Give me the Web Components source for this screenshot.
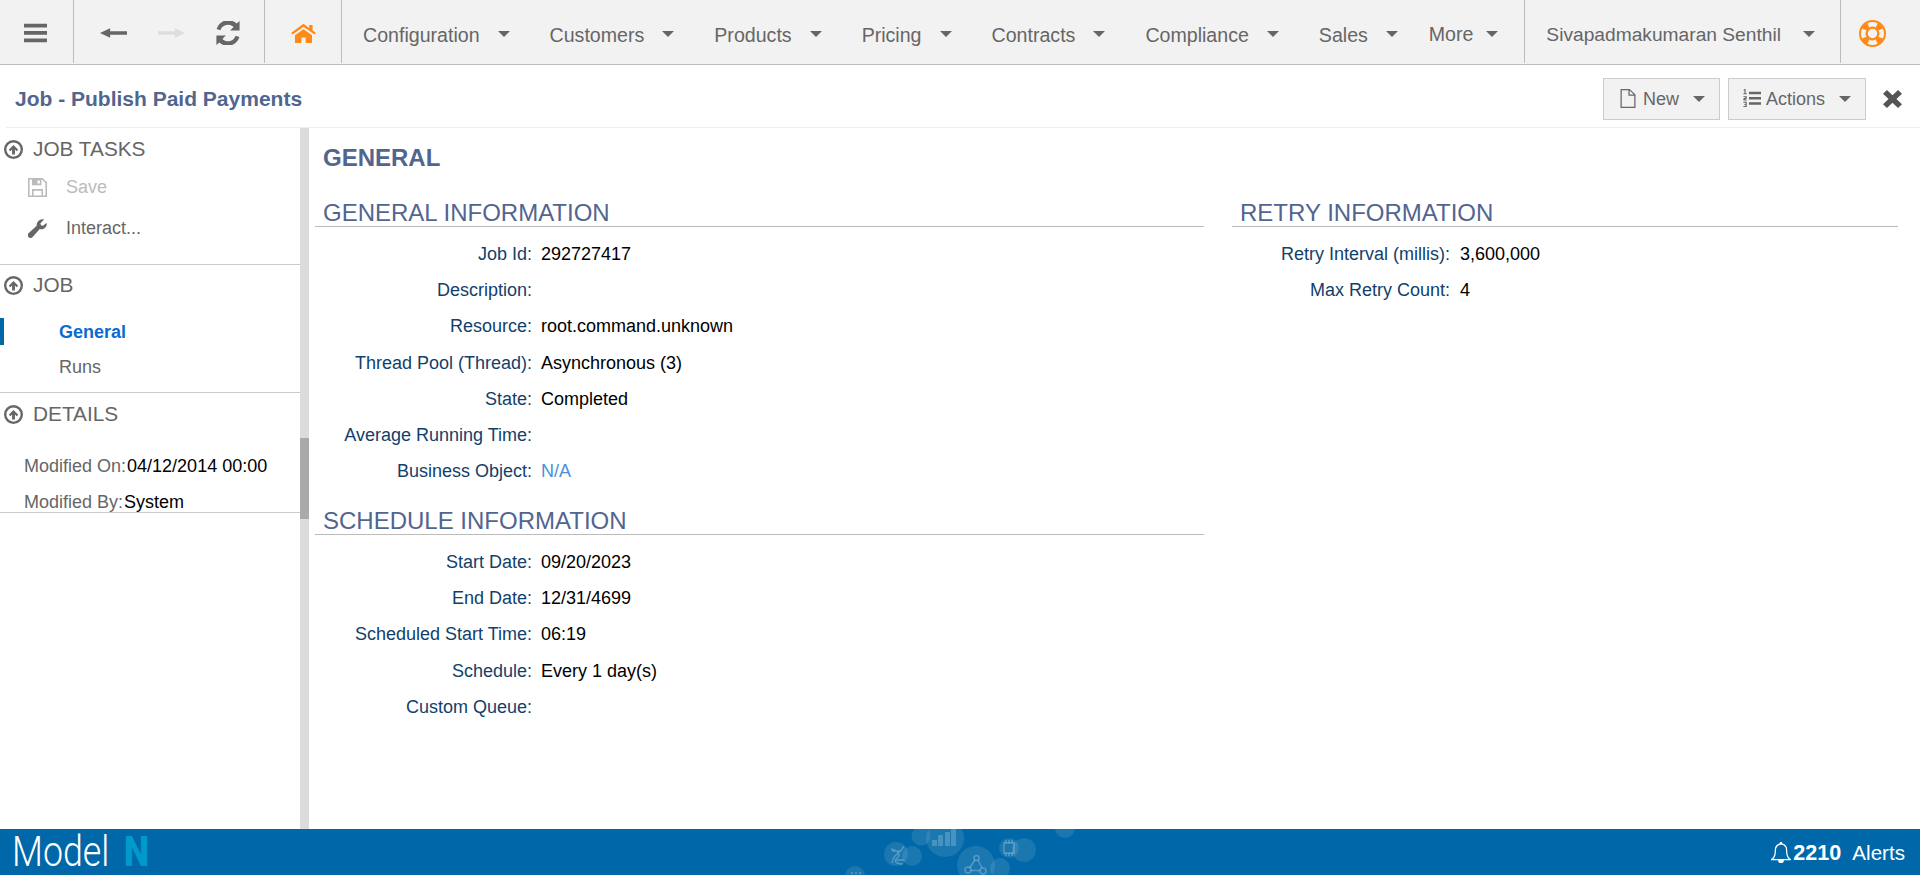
<!DOCTYPE html>
<html lang="en">
<head>
<meta charset="utf-8">
<title>Job - Publish Paid Payments</title>
<style>
    html, body { margin: 0; height: 100%; overflow: hidden; }
    body {
        display: flex;
        flex-direction: column;
        font-family: "Liberation Sans", Arial, sans-serif;
        background: #fff;
    }
</style>
</head>
<body>
<mn-topbar>
    <mn-nav-item>Configuration</mn-nav-item>
    <mn-nav-item>Customers</mn-nav-item>
    <mn-nav-item>Products</mn-nav-item>
    <mn-nav-item>Pricing</mn-nav-item>
    <mn-nav-item>Contracts</mn-nav-item>
    <mn-nav-item>Compliance</mn-nav-item>
    <mn-nav-item>Sales</mn-nav-item>
</mn-topbar>
<mn-pagehead>Job - Publish Paid Payments</mn-pagehead>
<mn-layout>
    <mn-sidebar slot="side"></mn-sidebar>
    <mn-form slot="main"></mn-form>
</mn-layout>
<mn-footer></mn-footer>

<script>
const ICONS = {
    bars: '<path d="M0 1h24v4.500H0zM0 9.700h24v4.500H0zM0 18.500h24v4.500H0z"/>',
    left: '<path d="M0 12 9 5v4.500h15v5H9V19z"/>',
    right: '<path d="M24 12 15 5v4.500H0v5h15V19z"/>',
    refresh: '<path d="M20.600 2.600 23.600 0v9.400h-9.400l3.400-3.300A8 8 0 0 0 4.400 9.200L.6 8.100A12 12 0 0 1 20.600 2.600zM3.400 21.400.4 24v-9.400h9.400l-3.400 3.300a8 8 0 0 0 13.200-3.100l3.800 1.100A12 12 0 0 1 3.400 21.400z"/>',
    home: '<path d="M12 1 17.500 6V2.500h3.200v6.300L24 12l-1.500 1.800L12 4.500 1.500 13.800 0 12zM3.800 14.800 12 7.500l8.200 7.300V24h-6.100v-6.500H9.900V24H3.800z"/>',
    ring: '<path fill-rule="evenodd" d="M12 0a12 12 0 1 1 0 24 12 12 0 0 1 0-24zM7.500 2.900l1.600 3.700a6 6 0 0 1 5.800 0l1.600-3.700a10.100 10.100 0 0 0-9 0zM21.100 7.500l-3.700 1.600a6 6 0 0 1 0 5.800l3.700 1.600a10.100 10.100 0 0 0 0-9zM2.900 7.500a10.100 10.100 0 0 0 0 9l3.700-1.600a6 6 0 0 1 0-5.800zM9.100 17.400l-1.600 3.700a10.100 10.100 0 0 0 9 0l-1.600-3.700a6 6 0 0 1-5.800 0zM12 7.800a4.200 4.200 0 1 0 0 8.400 4.200 4.200 0 0 0 0-8.400z"/>',
    file: '<path fill-rule="evenodd" d="M3 0h11l7 7v17H3zM4.500 1.500v21h15V8.500H12.500V1.500zM14 2v5h5z"/>',
    listol: '<path d="M8 3.500h16v3.500H8zM8 10.500h16v3.500H8zM8 17.500h16v3.500H8z"/><path d="M2 0h1.500v5.500H5V7H.5V5.500H2V1.800L.8 2.600V1.200zM.5 9.500h4.500v3L2.300 14H5v1.300H.5v-2.500L3.300 11V10.800H.5zM.5 17H5v7H.5v-1.300h3V21H1.500v-1.100h2v-1.600h-3z"/>',
    times: '<path d="M5 0 12 7l7-7 5 5-7 7 7 7-5 5-7-7-7 7-5-5 7-7-7-7z"/>',
    circleup: '<path fill-rule="evenodd" d="M12 0a12 12 0 1 1 0 24 12 12 0 0 1 0-24zM12 3a9 9 0 1 0 0 18 9 9 0 0 0 0-18z"/><path d="M12 6.200 18 12.200 16 14.200 13.800 12v6.200h-3.600V12L8 14.200 6 12.200z"/>',
    save: '<path fill-rule="evenodd" d="M0 0h18.500L24 5.500V24H0zM2 2v20h3v-8h14v8h3V6.300L17.700 2H17v7H5V2zM7 16v6h10v-6zM12 3v4h3V3z"/>',
    wrench: '<path d="M23.700 5.100c.6 3.700-2.500 8-6.500 8-.9 0-1.600-.1-2.300-.4L5.600 22.900a3.400 3.400 0 0 1-4.800 0l-.2-.2a3.400 3.400 0 0 1 0-4.800L11 8.500a7.400 7.400 0 0 1 7.300-8.300c.9 0 1.600.2 2 .4L15.700 5.300l.6 2.500 2.400.6z"/>',
    bell: '<path fill-rule="evenodd" d="M12 0a1.700 1.700 0 0 1 1.700 1.800C17.300 2.500 19.500 5.500 19.500 9c0 6 1.500 8.500 4.500 10.500v1.300H15.500a3.500 3.500 0 0 1-7 0H0v-1.300C3 17.500 4.500 15 4.500 9c0-3.500 2.200-6.500 5.800-7.200A1.700 1.700 0 0 1 12 0zm0 3.200C8.500 3.200 6 5.600 6 9c0 5-1 8.400-3.200 10.300h18.400C19 17.400 18 14 18 9c0-3.400-2.500-5.800-6-5.800z"/>'
};

class Icon extends HTMLElement {
    connectedCallback() {
        const w = this.getAttribute('w') || 20;
        const h = this.getAttribute('h') || w;
        this.attachShadow({ mode: 'open' }).innerHTML = `
        <style>
        :host { display: inline-flex; flex: none; line-height: 0; color: inherit; }
        </style>
        <svg width="${w}" height="${h}" viewBox="0 0 24 24" fill="currentColor" preserveAspectRatio="none">${ICONS[this.getAttribute('name')]}</svg>`;
    }
}
customElements.define('mn-icon', Icon);

class Caret extends HTMLElement {
    constructor() {
        super();
        this.attachShadow({ mode: 'open' }).innerHTML = `
        <style>
        :host {
            display: block;
            flex: none;
            width: 0;
            height: 0;
            border-left: 6px solid transparent;
            border-right: 6px solid transparent;
            border-top: 6px solid #666;
        }
        </style>`;
    }
}
customElements.define('mn-caret', Caret);

class NavItem extends HTMLElement {
    constructor() {
        super();
        this.attachShadow({ mode: 'open' }).innerHTML = `
        <style>
        :host {
            display: flex;
            align-items: center;
            padding: 6px 19px 0 21px;
            gap: 18px;
            font-size: 19.6px;
            color: #666;
        }
        mn-caret { margin-top: -2px; }
        </style>
        <slot></slot><mn-caret></mn-caret>`;
    }
}
customElements.define('mn-nav-item', NavItem);

class Topbar extends HTMLElement {
    constructor() {
        super();
        this.attachShadow({ mode: 'open' }).innerHTML = `
        <style>
        :host {
            display: flex;
            flex: none;
            height: 64px;
            background: #f2f2f2;
            border-bottom: 1px solid #bbb;
            color: #666;
            font-size: 19.2px;
        }
        .cell {
            display: flex;
            align-items: center;
            height: 63px;
            padding-top: 2px;
            border-right: 1px solid #bbb;
            box-sizing: border-box;
        }
        .menu { width: 74px; padding-left: 24px; }
        .hist { width: 191px; padding-left: 26px; gap: 31px; }
        .home { width: 77px; padding-left: 26px; color: #ff8a14; }
        .more {
            display: flex;
            align-items: center;
            gap: 13px;
            padding: 6px 26px 0 0;
            height: 57px;
            font-size: 19.6px;
            border-right: 1px solid #bbb;
        }
        .user {
            display: flex;
            align-items: center;
            gap: 22px;
            padding: 6px 25px 0 21px;
            height: 57px;
            border-right: 1px solid #bbb;
        }
        .more mn-caret, .user mn-caret { margin-top: -2px; }
        .help { width: 79px; display: flex; align-items: center; padding: 2px 0 0 18px; color: #ff8a14; box-sizing: border-box; }
        .off { color: #ddd; }
        .nav-wrap { display: flex; flex: 1; }
        </style>
        <div class="cell menu"><mn-icon name="bars" w="23" h="20"></mn-icon></div>
        <div class="cell hist">
            <mn-icon name="left" w="27" h="16"></mn-icon>
            <mn-icon class="off" name="right" w="27" h="16"></mn-icon>
            <mn-icon name="refresh" w="24"></mn-icon>
        </div>
        <div class="cell home"><mn-icon name="home" w="25" h="20"></mn-icon></div>
        <div class="nav-wrap"><slot></slot></div>
        <div class="more">More<mn-caret></mn-caret></div>
        <div class="user">Sivapadmakumaran Senthil<mn-caret></mn-caret></div>
        <div class="help"><mn-icon name="ring" w="27"></mn-icon></div>`;
    }
}
customElements.define('mn-topbar', Topbar);

class ActionButton extends HTMLElement {
    connectedCallback() {
        this.attachShadow({ mode: 'open' }).innerHTML = `
        <style>
        :host {
            display: flex;
            align-items: center;
            box-sizing: border-box;
            height: 42px;
            padding: 0 14px 0 14px;
            background: #f2f2f2;
            border: 1px solid #ccc;
            color: #666;
            font-size: 18px;
            gap: 5px;
        }
        mn-caret { margin-left: 9px; }
        mn-icon { margin-top: -2px; }
        </style>
        <mn-icon name="${this.getAttribute('icon')}" w="${this.getAttribute('w')}" h="${this.getAttribute('h')}"></mn-icon>
        <slot></slot>
        <mn-caret></mn-caret>`;
    }
}
customElements.define('mn-action-button', ActionButton);

class Pagehead extends HTMLElement {
    constructor() {
        super();
        this.attachShadow({ mode: 'open' }).innerHTML = `
        <style>
        :host {
            display: flex;
            flex: none;
            align-items: center;
            height: 63px;
            box-sizing: border-box;
            padding: 5px 18px 0 15px;
            gap: 8px;
            position: relative;
        }
        h1 {
            flex: 1;
            margin: 0;
            font-size: 21px;
            font-weight: bold;
            color: #52658f;
        }
        .close { color: #555; margin-left: 9px; }
        .rule { position: absolute; left: 6px; right: 0; bottom: 0; height: 1px; background: #efefef; }
        </style>
        <h1><slot></slot></h1>
        <mn-action-button icon="file" w="20" h="19">New</mn-action-button>
        <mn-action-button icon="listol" w="18" h="18">Actions</mn-action-button>
        <mn-icon class="close" name="times" w="19" h="18"></mn-icon>
        <div class="rule"></div>`;
    }
}
customElements.define('mn-pagehead', Pagehead);

class Layout extends HTMLElement {
    constructor() {
        super();
        this.attachShadow({ mode: 'open' }).innerHTML = `
        <style>
        :host { display: flex; flex: 1; min-height: 0; }
        .side { width: 300px; flex: none; }
        .bar { width: 9px; flex: none; background: #dcdcdc; }
        .thumb { height: 81px; margin-top: 310px; background: #a9a9a9; }
        .main { flex: 1; min-width: 0; }
        </style>
        <div class="side"><slot name="side"></slot></div>
        <div class="bar"><div class="thumb"></div></div>
        <div class="main"><slot name="main"></slot></div>`;
    }
}
customElements.define('mn-layout', Layout);

class SideSection extends HTMLElement {
    connectedCallback() {
        const nudge = this.getAttribute('nudge') || 0;
        this.attachShadow({ mode: 'open' }).innerHTML = `
        <style>
        :host { display: block; border-bottom: 1px solid #ccc; }
        .head {
            display: flex;
            align-items: center;
            box-sizing: border-box;
            height: 40px;
            padding: ${nudge}px 0 0 4px;
            gap: 10px;
            font-size: 20.8px;
            color: #666;
        }
        </style>
        <div class="head"><mn-icon name="circleup" w="19"></mn-icon>${this.getAttribute('heading')}</div>
        <slot></slot>`;
    }
}
customElements.define('mn-side-section', SideSection);

class Sidebar extends HTMLElement {
    constructor() {
        super();
        this.attachShadow({ mode: 'open' }).innerHTML = `
        <style>
        :host { display: block; font-size: 18px; color: #666; }
        .task { display: flex; align-items: center; height: 38px; padding-left: 28px; gap: 19px; }
        .task + .task { height: 45px; }
        .off { color: #bbb; }
        .tasks { padding-bottom: 13px; }
        .link { display: flex; align-items: center; height: 34px; padding-left: 59px; }
        .link + .link { height: 36px; }
        .active { color: #0b6bd1; font-weight: bold; position: relative; }
        .active::before { content: ""; position: absolute; left: 0; top: 3px; bottom: 4px; width: 4px; background: #0068a8; }
        .links { padding: 10px 0 7px; }
        .details { padding: 15px 0 0 24px; height: 64px; box-sizing: content-box; }
        .kv { display: flex; height: 36px; line-height: 36px; white-space: nowrap; }
        .kv span { color: #000; margin-left: 1px; }
        </style>
        <mn-side-section heading="JOB TASKS" nudge="2">
            <div class="tasks">
                <div class="task off"><mn-icon name="save" w="19"></mn-icon>Save</div>
                <div class="task"><mn-icon name="wrench" w="19"></mn-icon>Interact...</div>
            </div>
        </mn-side-section>
        <mn-side-section heading="JOB">
            <div class="links">
                <div class="link active">General</div>
                <div class="link">Runs</div>
            </div>
        </mn-side-section>
        <mn-side-section heading="DETAILS" nudge="2">
            <div class="details">
                <div class="kv">Modified On:<span>04/12/2014 00:00</span></div>
                <div class="kv">Modified By:<span>System</span></div>
            </div>
        </mn-side-section>`;
    }
}
customElements.define('mn-sidebar', Sidebar);

class Field extends HTMLElement {
    connectedCallback() {
        const width = this.getAttribute('label-width') || 217;
        const gap = this.getAttribute('gap') || 9;
        this.attachShadow({ mode: 'open' }).innerHTML = `
        <style>
        :host { display: flex; height: 36.2px; align-items: center; font-size: 18px; white-space: nowrap; }
        .label { flex: none; width: ${width}px; text-align: right; color: #123f6b; }
        .value { margin-left: ${gap}px; color: #000; }
        ::slotted(a) { color: #4a90d9; text-decoration: none; }
        </style>
        <div class="label">${this.getAttribute('label')}:</div>
        <div class="value"><slot></slot></div>`;
    }
}
customElements.define('mn-field', Field);

class FormSection extends HTMLElement {
    connectedCallback() {
        this.attachShadow({ mode: 'open' }).innerHTML = `
        <style>
        :host { display: block; }
        h3 {
            margin: 0 0 9.5px;
            padding: 13px 0 0 8px;
            height: 27px;
            line-height: 28px;
            font-size: 24px;
            font-weight: normal;
            color: #52658f;
            border-bottom: 1px solid #bbb;
        }
        </style>
        <h3>${this.getAttribute('heading')}</h3>
        <slot></slot>`;
    }
}
customElements.define('mn-form-section', FormSection);

class Form extends HTMLElement {
    constructor() {
        super();
        this.attachShadow({ mode: 'open' }).innerHTML = `
        <style>
        :host { display: block; padding: 0 22px 0 6px; }
        h2 { margin: 0; height: 58px; line-height: 60px; padding-left: 8px; font-size: 24px; color: #52658f; }
        .cols { display: flex; gap: 28px; }
        .left { width: 889px; flex: none; display: flex; flex-direction: column; gap: 4.2px; }
        .right { flex: 1; }
        </style>
        <h2>GENERAL</h2>
        <div class="cols">
            <div class="left">
                <mn-form-section heading="GENERAL INFORMATION">
                    <mn-field label="Job Id">292727417</mn-field>
                    <mn-field label="Description"></mn-field>
                    <mn-field label="Resource">root.command.unknown</mn-field>
                    <mn-field label="Thread Pool (Thread)">Asynchronous (3)</mn-field>
                    <mn-field label="State">Completed</mn-field>
                    <mn-field label="Average Running Time"></mn-field>
                    <mn-field label="Business Object"><a>N/A</a></mn-field>
                </mn-form-section>
                <mn-form-section heading="SCHEDULE INFORMATION">
                    <mn-field label="Start Date">09/20/2023</mn-field>
                    <mn-field label="End Date">12/31/4699</mn-field>
                    <mn-field label="Scheduled Start Time">06:19</mn-field>
                    <mn-field label="Schedule">Every 1 day(s)</mn-field>
                    <mn-field label="Custom Queue"></mn-field>
                </mn-form-section>
            </div>
            <div class="right">
                <mn-form-section heading="RETRY INFORMATION">
                    <mn-field label="Retry Interval (millis)" label-width="218" gap="10">3,600,000</mn-field>
                    <mn-field label="Max Retry Count" label-width="218" gap="10">4</mn-field>
                </mn-form-section>
            </div>
        </div>`;
    }
}
customElements.define('mn-form', Form);

class Footer extends HTMLElement {
    constructor() {
        super();
        this.attachShadow({ mode: 'open' }).innerHTML = `
        <style>
        :host {
            display: flex;
            flex: none;
            align-items: center;
            height: 46px;
            background: #0068a8;
            color: #fff;
            position: relative;
        }
        .logo {
            display: flex;
            align-items: center;
            height: 100%;
            padding-left: 12px;
            font-family: Roboto, "Liberation Sans", sans-serif;
            font-weight: 300;
            font-size: 38px;
            flex: 1;
        }
        .logo span { display: inline-block; width: 112px; transform: scale(0.94, 1.1); transform-origin: left center; }
        .logo b { display: inline-block; color: #0099cc; font-weight: 900; transform: scale(0.94, 1.1); transform-origin: left center; }
        .art { position: absolute; left: 840px; top: 0; }
        .alerts {
            display: flex;
            align-items: center;
            padding: 2px 15px 0 0;
            font-size: 20.6px;
            position: relative;
        }
        .alerts mn-icon { margin: -2px 2px 0 0; }
        .alerts b { font-size: 21.6px; }
        .alerts span { margin-left: 11px; }
        </style>
        <svg class="art" width="260" height="46" viewBox="840 829 260 46" fill="#fff">
            <g fill-opacity="0.1">
                <circle cx="921" cy="836" r="9.5"/><circle cx="945" cy="838" r="19"/>
                <circle cx="896" cy="854" r="12"/><circle cx="912" cy="856" r="10"/>
                <circle cx="976" cy="865" r="19"/><circle cx="1000" cy="868" r="10"/>
                <circle cx="1009" cy="848" r="10"/><circle cx="1024" cy="850" r="12"/>
                <circle cx="1065" cy="828" r="10"/><circle cx="855" cy="876" r="10"/>
            </g>
            <g fill-opacity="0.2">
                <rect x="932" y="840" width="5" height="6"/><rect x="938" y="835" width="5" height="11"/>
                <rect x="945" y="832" width="5" height="14"/><rect x="951" y="829" width="5" height="17"/>
                <rect x="851" y="872" width="2" height="2"/><rect x="855" y="872" width="2" height="2"/><rect x="859" y="872" width="2" height="2"/>
            </g>
            <g fill="none" stroke="#fff" stroke-opacity="0.25" stroke-width="1.500">
                <circle cx="976.500" cy="858" r="2.500"/><circle cx="968" cy="870" r="3"/><circle cx="983" cy="871" r="3"/>
                <path d="M975 860 969.500 868M978 860 982 868M971 870.500h9"/>
                <path d="M891 849c8 2 10 6 6 9s-1 6 6 6M904 846c-2 5-6 7-9 10s-2 5-3 7M892 851h9M896 860h8"/>
                <rect x="1004" y="843" width="10" height="10"/>
                <path d="M1006 840v3M1009 840v3M1012 840v3M1006 853v3M1009 853v3M1012 853v3"/>
            </g>
        </svg>
        <div class="logo"><span>Model</span><b>N</b></div>
        <div class="alerts"><mn-icon name="bell" w="20" h="21"></mn-icon><b>2210</b><span>Alerts</span></div>`;
    }
}
customElements.define('mn-footer', Footer);
</script>
</body>
</html>
